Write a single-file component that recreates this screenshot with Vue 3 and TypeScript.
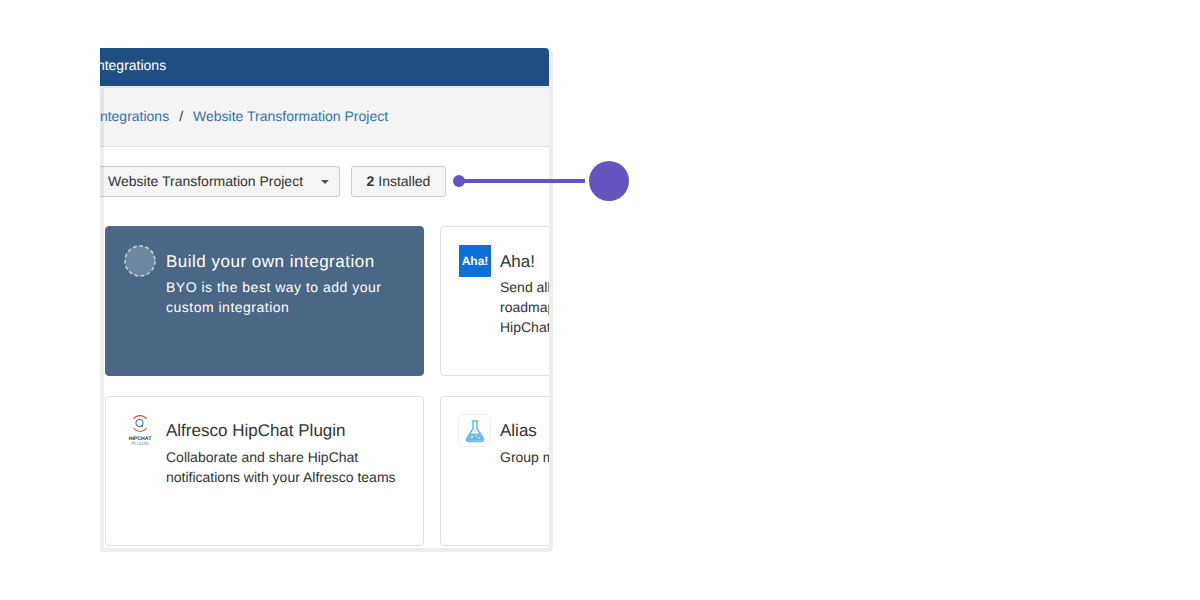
<script setup lang="ts">
interface Card { id: string; title: string; lines: string[]; kind: string }
const cards: Card[] = [
  { id: 'byo', title: 'Build your own integration', lines: ['BYO is the best way to add your', 'custom integration'], kind: 'byo' },
  { id: 'aha', title: 'Aha!', lines: ['Send all your Aha!', 'roadmap updates to', 'HipChat rooms'], kind: 'aha' },
  { id: 'alfresco', title: 'Alfresco HipChat Plugin', lines: ['Collaborate and share HipChat', 'notifications with your Alfresco teams'], kind: 'alfresco' },
  { id: 'alias', title: 'Alias', lines: ['Group mentions for your team'], kind: 'alias' },
]
</script>

<template>
  <div class="page">
    <section class="window">
      <header class="topbar"><span class="clipped top">Integrations</span></header>
      <div class="body">
        <nav class="crumbs">
          <a class="clipped">Integrations</a>
          <span class="sep">/</span>
          <a>Website Transformation Project</a>
        </nav>
        <div class="filters">
          <div class="btn select">
            <span>Website Transformation Project</span>
            <i class="caret"></i>
          </div>
          <div class="btn installed"><b>2</b> Installed</div>
        </div>
        <div class="grid">
          <article v-for="c in cards" :key="c.id" class="card" :class="{ dark: c.kind === 'byo' }">
            <div class="logo">
              <svg v-if="c.kind === 'byo'" width="32" height="32" viewBox="0 0 32 32">
                <circle cx="16" cy="16" r="15" fill="#6f869f" stroke="#c8d0d9" stroke-width="1.500" stroke-dasharray="4 2.300" />
              </svg>
              <div v-else-if="c.kind === 'aha'" class="aha">Aha!</div>
              <svg v-else-if="c.kind === 'alfresco'" width="32" height="33" viewBox="0 0 32 33">
                <path d="M9.500 4A8 8 0 0 1 22.500 4" fill="none" stroke="#d9482b" stroke-width="1.200" />
                <path d="M9.500 13A8 8 0 0 0 22.500 13" fill="none" stroke="#e0622f" stroke-width="1.200" />
                <circle cx="15.500" cy="8" r="3.500" fill="#fff" stroke="#4a78a8" stroke-width="1.100" />
                <path d="M16.500 11l2.300 1.800v-3.300z" fill="#4a78a8" />
                <text x="16" y="25.200" class="hip">HIPCHAT</text>
                <text x="16" y="30.400" class="plug">PLUGIN</text>
              </svg>
              <div v-else class="alias">
                <svg width="26" height="26" viewBox="0 0 26 26">
                  <path d="M10 3h6M11 3.500v7L4.800 20.500c-.9 1.600.1 3 1.800 3h12.800c1.700 0 2.700-1.400 1.800-3L15 10.500v-7" fill="none" stroke="#6cb8ee" stroke-width="1.500" stroke-linejoin="round" stroke-linecap="round" />
                  <path d="M8 15.500h10l3 5.200c.5 1.200-.2 2.100-1.500 2.100h-13c-1.300 0-2-.9-1.500-2.100z" fill="#6cb8ee" />
                  <circle cx="10" cy="19" r="1" fill="#fff" />
                  <circle cx="14" cy="18" r=".8" fill="#fff" />
                  <circle cx="17" cy="20" r=".8" fill="#fff" />
                  <circle cx="13" cy="12" r=".7" fill="#6cb8ee" />
                </svg>
              </div>
            </div>
            <div class="copy">
              <h3>{{ c.title }}</h3>
              <p v-for="l in c.lines" :key="l">{{ l }}</p>
            </div>
          </article>
        </div>
      </div>
    </section>
    <div class="callout">
      <span class="dot"></span>
      <span class="line"></span>
      <span class="pin"></span>
    </div>
  </div>
</template>

<style>
html, body { margin: 0; background: #fff; }
</style>

<style scoped>
.page {
  position: relative;
  width: 1200px;
  height: 600px;
  padding: 48px 0 0 100px;
  box-sizing: border-box;
  overflow: hidden;
  font-family: "Liberation Sans", Arial, sans-serif;
  text-rendering: geometricPrecision;
  color: #333;
}
.window {
  width: 453px;
  height: 504px;
  box-sizing: border-box;
  border-right: 4px solid #eceef2;
  border-bottom: 4px solid #eceef2;
  border-radius: 0 5px 5px 0;
  overflow: hidden;
  display: flex;
  flex-direction: column;
}
.topbar {
  flex: none;
  height: 38px;
  background: #1f4f82;
  border-bottom: 2px solid #e8e8e8;
  color: #fff;
  font-size: 14px;
  line-height: 35px;
  border-radius: 0 4px 0 0;
  overflow: hidden;
}
.clipped { display: inline-block; margin-left: -4px; }
.clipped.top { margin-left: -7px; }
.body {
  position: relative;
  flex: 1;
  min-height: 0;
  overflow: hidden;
}
.body::before {
  content: "";
  position: absolute;
  left: 0;
  top: 0;
  bottom: 0;
  width: 4px;
  background: rgba(9, 30, 66, .07);
}
.crumbs {
  height: 59px;
  box-sizing: border-box;
  background: #f4f4f4;
  border-bottom: 1px solid #ddd;
  font-size: 14px;
  line-height: 56px;
  color: #3572b0;
  white-space: nowrap;
}
.sep { color: #333; margin: 0 10px; }
.filters {
  display: flex;
  gap: 11px;
  padding-top: 19px;
  height: 50px;
}
.btn {
  height: 31px;
  box-sizing: border-box;
  background: #f5f5f5;
  border: 1px solid #ccc;
  border-radius: 3px;
  font-size: 14px;
  line-height: 29px;
  white-space: nowrap;
}
.select {
  width: 240px;
  border-left: 0;
  border-radius: 0 3px 3px 0;
  padding: 0 10px 0 8px;
  display: flex;
  align-items: center;
  justify-content: space-between;
}
.caret {
  width: 0;
  height: 0;
  border-left: 4px solid transparent;
  border-right: 4px solid transparent;
  border-top: 4px solid #555;
}
.installed { width: 95px; text-align: center; }
.grid {
  display: grid;
  grid-template-columns: 319px 319px;
  grid-auto-rows: 150px;
  gap: 20px 16px;
  margin-left: 5px;
  padding-top: 10px;
}
.card {
  box-sizing: border-box;
  border: 1px solid #e0e0e0;
  border-radius: 4px;
  padding: 18px 0 0 18px;
  display: flex;
  background: #fff;
  white-space: nowrap;
}
.card.dark {
  background: #4a6785;
  border-color: #4a6785;
  color: #fff;
  letter-spacing: .5px;
}
.logo { width: 32px; height: 32px; flex: none; margin-right: 10px; }
.card:nth-child(even) .logo { margin-right: 9px; }
.aha {
  width: 32px;
  height: 32px;
  background: #0c70d8;
  color: #fff;
  font-size: 12px;
  font-weight: 700;
  line-height: 32px;
  text-align: center;
}
.alias {
  width: 33px;
  height: 33px;
  margin: -1px 0 0 -1px;
  box-sizing: border-box;
  border: 1px solid #eee;
  border-radius: 6px;
  display: flex;
  align-items: center;
  justify-content: center;
}
.hip {
  font-size: 5.200px;
  font-weight: 700;
  fill: #333;
  text-anchor: middle;
}
.plug {
  font-size: 4.600px;
  fill: #888;
  text-anchor: middle;
}
h3 {
  margin: 0;
  font-size: 17px;
  font-weight: 400;
  line-height: 32px;
}
.card:nth-child(-n+2) h3 {
  padding-top: 1px;
  margin-bottom: -1px;
}
p {
  margin: 0;
  font-size: 14px;
  line-height: 20px;
}
.callout {
  position: absolute;
  left: 453px;
  top: 161px;
  width: 176px;
  height: 40px;
  display: flex;
  align-items: center;
}
.dot { width: 12px; height: 12px; border-radius: 50%; background: #6554c0; flex: none; }
.line { width: 121px; height: 4px; background: #6554c0; margin-left: -1px; flex: none; }
.pin { width: 40px; height: 40px; border-radius: 50%; background: #6554c0; margin-left: 4px; flex: none; }
</style>
